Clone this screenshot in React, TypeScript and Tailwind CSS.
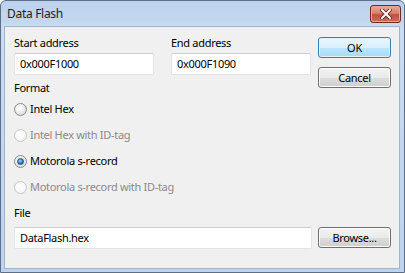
import React from "react";

const font = { fontFamily: '"Noto Sans", "Open Sans", sans-serif' };

const Radio = ({ label, checked = false, disabled = false }: { label: string; checked?: boolean; disabled?: boolean }) => (
  <div className="flex h-[26px] items-center gap-[3px]">
    <span
      className={
        disabled
          ? "flex h-[13px] w-[13px] items-center justify-center rounded-full border border-[#c8c8c8] bg-[radial-gradient(circle_at_40%_35%,#ffffff,#f0f0f0)]"
          : "flex h-[13px] w-[13px] items-center justify-center rounded-full border border-[#8a8a8a] bg-[radial-gradient(circle_at_40%_35%,#ffffff_10%,#cfcfcf)]"
      }
    >
      {checked && (
        <span className="h-[7px] w-[7px] rounded-full border border-[#1b4c78] bg-[radial-gradient(circle_at_40%_35%,#9fd3fa,#2a79c2_60%,#123f6b)]" />
      )}
    </span>
    <span className={disabled ? "text-[#8a8a8a]" : "text-black"}>{label}</span>
  </div>
);

const TextBox = ({ value, className }: { value: string; className: string }) => (
  <div
    className={
      "flex h-[22px] items-center rounded-[2px] border border-[#e3e3e3] border-t-[#cdcdcd] bg-white pl-[5px] " + className
    }
  >
    {value}
  </div>
);

const Button = ({ label, primary = false }: { label: string; primary?: boolean }) => (
  <button
    className={
      primary
        ? "flex h-[21px] w-[73px] items-center justify-center rounded-[3px] border border-[#3c7fb1] bg-[linear-gradient(#eaf6fd,#d9f0fc_50%,#bee6fd_51%,#a7d9f5)] shadow-[inset_0_0_0_1px_#def2fc]"
        : "flex h-[21px] w-[73px] items-center justify-center rounded-[3px] border border-[#707070] bg-[linear-gradient(#f2f2f2,#ebebeb_50%,#dddddd_51%,#cfcfcf)] shadow-[inset_0_0_0_1px_#fcfcfc]"
    }
  >
    {label}
  </button>
);

export default function App() {
  return (
    <div
      style={font}
      className="flex h-[273px] w-[405px] flex-col rounded-t-[6px] border border-[#5d6f86] bg-[linear-gradient(#bcd1ec,#c3d7ef_20px,#c9dcf2_26px,#bdd3ee)] text-[11px] leading-[16px] tracking-[-0.3px] text-black"
    >
      {/* Title bar */}
      <div className="flex h-[25px] items-start justify-between pl-[6px] pr-[3px]">
        <span className="mt-[5px] text-[12px] text-[#1e1e1e]">Data Flash</span>
        <button className="mt-[4px] flex h-[18px] w-[31px] items-center justify-center rounded-[3px] border border-[#6b2a22] bg-[linear-gradient(#e9a99b,#d7806f_45%,#c24f3c_55%,#cf6e55)] shadow-[inset_0_0_0_1px_#eaa596]">
          <svg width="12" height="10" viewBox="0 0 12 10">
            <path d="M2 1 L10 9 M10 1 L2 9" stroke="#5a2018" strokeWidth="3.6" strokeLinecap="square" />
            <path d="M2 1 L10 9 M10 1 L2 9" stroke="#ffffff" strokeWidth="2" strokeLinecap="square" />
          </svg>
        </button>
      </div>

      {/* Client area */}
      <div className="mb-[3px] ml-[3px] mr-[4px] flex flex-1 gap-[6px] border border-[#9fb4cf] bg-[#f0f0f0] pl-[9px] pt-[8px]">
        {/* Left column */}
        <div className="flex w-[298px] flex-col">
          <div className="flex gap-[17px]">
            <div className="flex flex-col">
              <span>Start address</span>
              <TextBox value="0x000F1000" className="mt-[2px] w-[140px]" />
            </div>
            <div className="flex flex-col">
              <span>End address</span>
              <TextBox value="0x000F1090" className="mt-[2px] w-[140px]" />
            </div>
          </div>

          <span className="mt-[5px]">Format</span>
          <Radio label="Intel Hex" />
          <Radio label="Intel Hex with ID-tag" disabled />
          <Radio label="Motorola s-record" checked />
          <Radio label="Motorola s-record with ID-tag" disabled />

          <span className="mt-[5px]">File</span>
          <TextBox value="DataFlash.hex" className="mt-[6px] w-[298px]" />
        </div>

        {/* Right column: buttons */}
        <div className="flex flex-col pt-[2px]">
          <Button label="OK" primary />
          <div className="mt-[9px]">
            <Button label="Cancel" />
          </div>
          <div className="mt-auto mb-[20px]">
            <Button label="Browse..." />
          </div>
        </div>
      </div>
    </div>
  );
}
